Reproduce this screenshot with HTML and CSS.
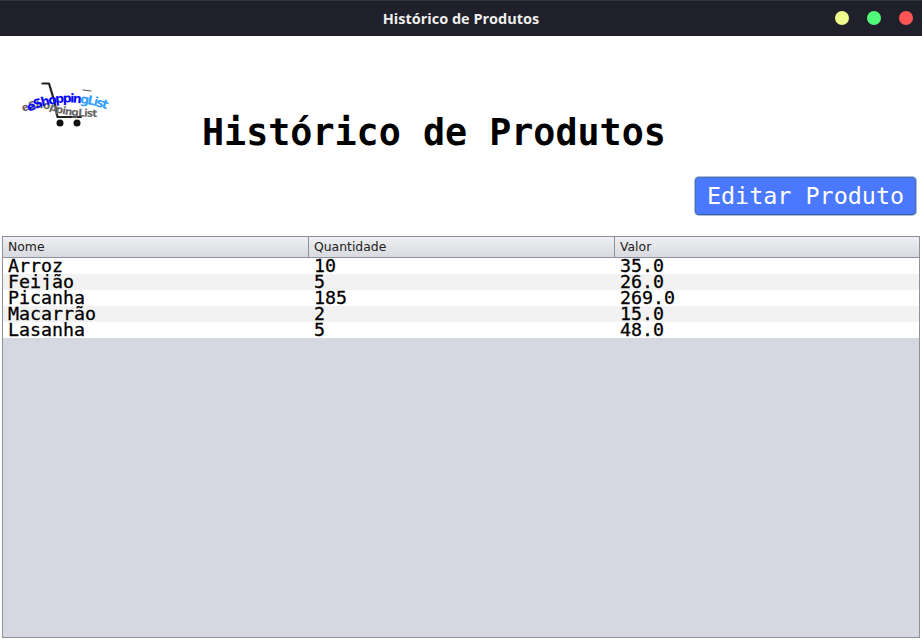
FILE: index.html
```html
<!DOCTYPE html>
<html lang="pt">
<head>
<meta charset="utf-8">
<title>Histórico de Produtos</title>
<link rel="stylesheet" href="styles.css">
</head>
<body>
<div class="window">
  <header class="titlebar">
    <span class="titlebar-text">Histórico de Produtos</span>
    <div class="controls">
      <span class="dot dot-yellow"></span>
      <span class="dot dot-green"></span>
      <span class="dot dot-red"></span>
    </div>
  </header>
  <section class="top">
    <div class="logo">
      <svg class="logo-svg" width="90" height="50" viewBox="0 0 90 50" aria-label="eShoppingList">
        <defs>
          <path id="arcTop" d="M10 32 Q 46 14 89 30"/>
          <path id="arcShadow" d="M4 32 Q 20 25 34 31 T 80 37"/>
        </defs>
        <g fill="none" stroke="#222" stroke-linecap="round" stroke-linejoin="round">
          <path d="M23.500 3.500H30L35 20L38.500 37H62" stroke-width="2.200"/>
          <path d="M64 10L72 11" stroke-width="0.800"/>
        </g>
        <circle cx="41" cy="43" r="3.500" fill="#111"/>
        <circle cx="58" cy="43" r="3.500" fill="#111"/>
        <text class="logo-shadow"><textPath href="#arcShadow" textLength="76">eShoppingList</textPath></text>
        <text class="logo-text"><textPath href="#arcTop" textLength="80"><tspan class="logo-dark">eShoppin</tspan><tspan class="logo-light">gList</tspan></textPath></text>
      </svg>
    </div>
    <h1 class="title">Histórico de Produtos</h1>
    <button class="edit-btn" type="button">Editar Produto</button>
  </section>
  <section class="table">
    <div class="row head">
      <div class="hcell">Nome</div>
      <div class="hcell">Quantidade</div>
      <div class="hcell">Valor</div>
    </div>
    <div class="row"><div class="cell">Arroz</div><div class="cell">10</div><div class="cell">35.0</div></div>
    <div class="row alt"><div class="cell">Feijão</div><div class="cell">5</div><div class="cell">26.0</div></div>
    <div class="row"><div class="cell">Picanha</div><div class="cell">185</div><div class="cell">269.0</div></div>
    <div class="row alt"><div class="cell">Macarrão</div><div class="cell">2</div><div class="cell">15.0</div></div>
    <div class="row"><div class="cell">Lasanha</div><div class="cell">5</div><div class="cell">48.0</div></div>
  </section>
</div>
</body>
</html>
```
FILE: styles.css
```css
* { box-sizing: border-box; }
html, body { margin: 0; padding: 0; }
body { background: #fff; width: 922px; height: 639px; overflow: hidden; }
.window { display: flex; flex-direction: column; height: 639px; }

.titlebar {
  height: 36px;
  flex: none;
  background: #1f2029;
  border-top: 1px solid #34353e;
  display: flex;
  align-items: center;
  justify-content: center;
  position: relative;
}
.titlebar-text {
  font: bold 14.500px "Open Sans", "Noto Sans", sans-serif;
  color: #eeeeee;
}
.controls {
  position: absolute;
  right: 9px;
  top: 10px;
  display: flex;
  gap: 18px;
}
.dot { width: 14px; height: 14px; border-radius: 50%; display: block; }
.dot-yellow { background: #f1fa8c; }
.dot-green { background: #50fa7b; }
.dot-red { background: #ff5555; }

.top {
  height: 200px;
  flex: none;
  display: grid;
  grid-template-columns: 202px 1fr auto;
  grid-template-rows: 140px 60px;
  padding-right: 6px;
}
.logo { padding: 44px 0 0 19px; grid-row: 1; grid-column: 1; }
.logo-svg { display: block; overflow: visible; }
.logo-text { font: bold 12.500px "DejaVu Sans", sans-serif; }
.logo-dark { fill: #0a0aff; }
.logo-light { fill: #35a0ff; }
.logo-shadow { font: bold 10.500px "DejaVu Sans", sans-serif; fill: #666; }
.title {
  grid-row: 1;
  grid-column: 2 / 4;
  margin: 0;
  padding-top: 73px;
  font: bold 36.700px/48px "DejaVu Sans Mono", monospace;
  color: #000;
  white-space: nowrap;
}
.edit-btn {
  grid-row: 2;
  grid-column: 3;
  align-self: start;
  height: 38px;
  width: 221px;
  margin-top: 1px;
  padding: 0;
  border: 1px solid #4a6fb8;
  border-bottom-color: #3f5f9e;
  border-radius: 4px;
  background: #4a78ff;
  box-shadow: 0 0 0 1px #a9c0dc;
  color: #fff;
  font: 23.400px/36px "DejaVu Sans Mono", monospace;
  text-align: center;
}

.table {
  flex: none;
  height: 402px;
  margin: 0 2px;
  background: #d5d8e1;
  border: 1px solid #8e909c;
}
.row {
  display: grid;
  grid-template-columns: 306px 306px 1fr;
  height: 16px;
  background: #fff;
}
.row.alt { background: #f2f2f2; }
.row.head {
  height: 21px;
  background: linear-gradient(#eff0f3, #d9dae0);
  border-bottom: 1px solid #8e909c;
}
.hcell {
  font: 12.400px/20px "DejaVu Sans", sans-serif;
  color: #222;
  padding-left: 5px;
  border-right: 1px solid #8e909c;
}
.hcell:last-child { border-right: 0; }
.cell {
  font: 18.300px/16px "DejaVu Sans Mono", monospace;
  -webkit-text-stroke: 0.3px #000;
  color: #000;
  padding-left: 5px;
  overflow: hidden;
  white-space: nowrap;
}
```
